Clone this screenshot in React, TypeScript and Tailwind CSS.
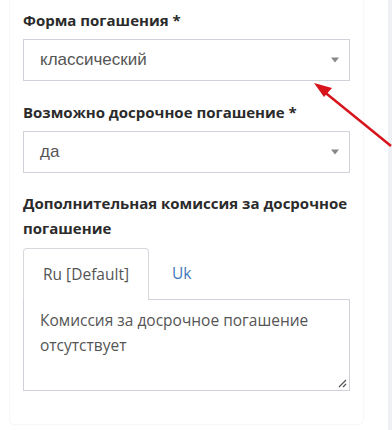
import { useState } from "react";

const LABEL = "font-['Open_Sans',sans-serif] font-bold text-[15px] text-[#2b2b2b] leading-[25px]";

function Select({ value }: { value: string }) {
  return (
    <div className="relative h-[42px] border border-[#cfd2d8] bg-white flex items-center pl-[16px]">
      <span className="font-['Liberation_Sans',Arial,sans-serif] text-[17px] text-[#555]">{value}</span>
      {/* caret */}
      <span className="absolute right-[10px] top-1/2 -translate-y-1/2 w-0 h-0 border-l-[4px] border-r-[4px] border-t-[5px] border-l-transparent border-r-transparent border-t-[#888]" />
    </div>
  );
}

export default function App() {
  const [tab, setTab] = useState<"ru" | "uk">("ru");

  return (
    <div className="relative w-[392px] h-[430px] bg-white overflow-hidden flex">
      <div className="flex-1 pl-[10px] pr-[25px]">
        <div className="bg-white rounded-b-[4px] shadow-[0_0_2px_rgba(0,0,0,0.12)] px-[13px] pt-[8px] pb-[33px] -mt-[2px]">
          <div className={LABEL + " mb-[6px] pt-[2px]"}>Форма погашения *</div>
          <Select value="классический" />

          <div className={LABEL + " mt-[19px] mb-[6px]"}>Возможно досрочное погашение *</div>
          <Select value="да" />

          <div className={LABEL + " mt-[18px] mb-[7px]"}>
            Дополнительная комиссия за досрочное погашение
          </div>

          <div className="flex font-['Open_Sans',sans-serif] text-[15.5px]">
            <button
              onClick={() => setTab("ru")}
              className="h-[52px] w-[126px] border border-[#d6d8dd] border-b-0 rounded-t-[4px] bg-white text-[#555] relative z-10 -mb-px"
            >
              Ru [Default]
            </button>
            <button onClick={() => setTab("uk")} className="h-[51px] px-[23px] text-[#3f78b8]">
              Uk
            </button>
          </div>
          <div className="relative h-[92px] border border-[#cfd2d8] px-[16px] pt-[8px] font-['Open_Sans',sans-serif] text-[15.5px] text-[#555] leading-[25px]">
            {tab === "ru" ? "Комиссия за досрочное погашение отсутствует" : ""}
            {/* resize grip */}
            <svg className="absolute right-[2px] bottom-[2px]" width="9" height="9" viewBox="0 0 9 9">
              <path d="M8 1 L1 8 M8 5 L5 8" stroke="#555" strokeWidth="1.2" />
            </svg>
          </div>
        </div>
      </div>
      <div className="w-[4px] bg-[#eef0f4]" />

      {/* red annotation arrow */}
      <svg className="absolute left-0 top-0 pointer-events-none" width="392" height="430">
        <line x1="391" y1="146" x2="322" y2="90" stroke="#d7141b" strokeWidth="2.5" />
        <polygon points="314,83 332,88 324,97" fill="#d7141b" />
      </svg>
    </div>
  );
}
